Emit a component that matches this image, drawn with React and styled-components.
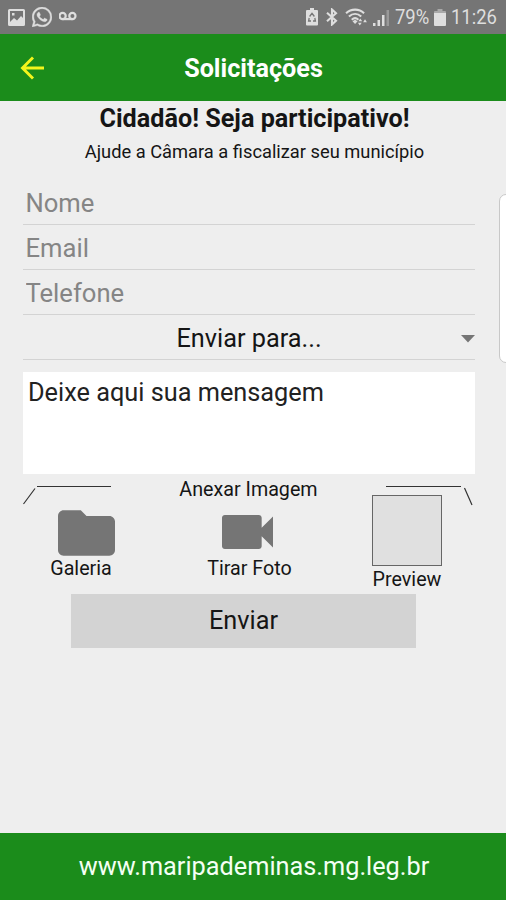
import React from 'react';
import styled, { createGlobalStyle } from 'styled-components';

const GlobalStyle = createGlobalStyle`
  * {
    box-sizing: border-box;
  }

  body {
    margin: 0;
    background: #eeeeee;
    font-family: Roboto, sans-serif;
  }
`;

const Screen = styled.div`
  position: relative;
  display: flex;
  flex-direction: column;
  width: 506px;
  height: 900px;
  overflow: hidden;
  background: #eeeeee;
  color: #151515;
`;

const StatusBar = styled.div`
  display: flex;
  justify-content: space-between;
  flex: none;
  height: 34px;
  padding: 0 9px 0 8px;
  background: #757575;
  color: #dedede;
`;

const StatusGroup = styled.div`
  display: flex;
  align-items: center;
  gap: ${(props) => props.$gap}px;
  height: 34px;

  svg {
    display: block;
    flex: none;
  }
`;

const StatusText = styled.span`
  width: ${(props) => props.$width}px;
  font-size: 20.5px;
  line-height: 36px;
  white-space: nowrap;
  transform: scaleX(0.9);
  transform-origin: left;
`;

const Header = styled.header`
  display: grid;
  grid-template-columns: 66px 1fr 66px;
  align-items: center;
  flex: none;
  height: 67px;
  padding-top: 1px;
  background: #1b8c1b;
`;

const BackButton = styled.button`
  display: flex;
  padding: 0 0 0 20px;
  border: 0;
  background: none;
`;

const Title = styled.h1`
  margin: 0;
  padding: 2px 0 0 1px;
  color: #fff;
  font-size: 25.2px;
  font-weight: 700;
  line-height: 64px;
  text-align: center;
`;

const Heading = styled.h2`
  margin: 0;
  padding-left: 3px;
  font-size: 25.2px;
  font-weight: 700;
  line-height: 35px;
  text-align: center;
`;

const Subtitle = styled.p`
  margin: 0 0 13px;
  padding-left: 3px;
  font-size: 18.3px;
  line-height: 31px;
  text-align: center;
`;

const Form = styled.form`
  display: flex;
  flex-direction: column;
  margin: 0 31px 0 23px;
`;

const Field = styled.input`
  height: 45px;
  padding: 2px 2.5px 0;
  border: 0;
  border-bottom: 1px solid #d3d3d3;
  outline: 0;
  background: none;
  font: 25.6px Roboto, sans-serif;

  &::placeholder {
    color: #858585;
    opacity: 1;
  }
`;

const Select = styled.div`
  display: flex;
  align-items: center;
  height: 45px;
  padding-top: 3px;
  border-bottom: 1px solid #d3d3d3;
  font-size: 25.3px;

  span {
    flex: 1;
    padding-left: 14px;
    text-align: center;
  }
`;

const Message = styled.textarea`
  height: 102px;
  margin: 12px 0 10px;
  padding: 6px 5px;
  border: 0;
  outline: 0;
  resize: none;
  background: #fff;
  color: #222;
  font: 25.3px/30px Roboto, sans-serif;
`;

const AttachHeader = styled.div`
  display: flex;
  justify-content: space-between;
  height: 22px;
  margin-bottom: -11px;
  font-size: 19.7px;
  line-height: 12px;
`;

const AttachRow = styled.div`
  display: flex;
  height: 99px;
`;

const Attachment = styled.div`
  display: flex;
  flex-direction: column;
  align-items: center;
  width: ${(props) => props.$width}px;
  margin-left: ${(props) => props.$left}px;
  padding-top: ${(props) => props.$top}px;
  color: #757575;

  svg {
    display: block;
    flex: none;
  }
`;

const Label = styled.span`
  margin-top: ${(props) => props.$top}px;
  margin-left: ${(props) => props.$shift || 0}px;
  color: #151515;
  font-size: 19.7px;
  line-height: 24px;
  white-space: nowrap;
`;

const PreviewBox = styled.div`
  flex: none;
  width: 70px;
  height: 71px;
  border: 1px solid #666;
  background: #e0e0e0;
`;

const SendButton = styled.button`
  width: 345px;
  height: 54px;
  margin-left: 48px;
  padding: 0 0 2px;
  border: 0;
  background: #d3d3d3;
  color: #151515;
  font: 25.3px Roboto, sans-serif;
`;

const Footer = styled.footer`
  flex: none;
  height: 67px;
  margin-top: auto;
  padding-left: 2px;
  background: #1b8c1b;
  color: #f4fff4;
  font-size: 25.3px;
  line-height: 67px;
  text-align: center;
`;

// edge panel handle, floats over the form
const EdgeHandle = styled.div`
  position: absolute;
  top: 194px;
  right: -8px;
  width: 15px;
  height: 169px;
  border: 1px solid #c8c8c8;
  border-radius: 7px;
  background: #fff;
`;

const PictureIcon = () => (
  <svg width="17" height="17" viewBox="0 0 17 17">
    <path
      fill="currentColor"
      fillRule="evenodd"
      d="M1.500 0h14A1.500 1.500 0 0 1 17 1.500v14a1.500 1.500 0 0 1-1.500 1.500h-14A1.500 1.500 0 0 1 0 15.500v-14A1.500 1.500 0 0 1 1.500 0zM2 2v11l4-4 3 2.500L13 7l2 2V2zM4 4h2.500v2.500H4z"
    />
  </svg>
);

const WhatsAppIcon = () => (
  <svg width="20" height="20" viewBox="0 0 24 24" fill="currentColor" stroke="currentColor" strokeWidth=".5">
    <path d="M17.472 14.382c-.297-.149-1.758-.867-2.03-.967-.273-.099-.471-.148-.67.15-.197.297-.767.966-.94 1.164-.173.199-.347.223-.644.075-.297-.15-1.255-.463-2.39-1.475-.883-.788-1.48-1.761-1.653-2.059-.173-.297-.018-.458.13-.606.134-.133.298-.347.446-.52.149-.174.198-.298.298-.497.099-.198.05-.371-.025-.52-.075-.149-.669-1.612-.916-2.207-.242-.579-.487-.5-.669-.51-.173-.008-.371-.01-.57-.01-.198 0-.52.074-.792.372-.272.297-1.04 1.016-1.04 2.479 0 1.462 1.065 2.875 1.213 3.074.149.198 2.096 3.2 5.077 4.487.709.306 1.262.489 1.694.625.712.227 1.36.195 1.871.118.571-.085 1.758-.719 2.006-1.413.248-.694.248-1.289.173-1.413-.074-.124-.272-.198-.57-.347m-5.421 7.403h-.004a9.87 9.87 0 0 1-5.031-1.378l-.361-.214-3.741.982.998-3.648-.235-.374a9.86 9.86 0 0 1-1.51-5.26c.001-5.45 4.436-9.884 9.888-9.884 2.64 0 5.122 1.03 6.988 2.898a9.825 9.825 0 0 1 2.893 6.994c-.003 5.45-4.437 9.884-9.885 9.884m8.413-18.297A11.815 11.815 0 0 0 12.05 0C5.495 0 .16 5.335.157 11.892c0 2.096.547 4.142 1.588 5.945L.057 24l6.305-1.654a11.882 11.882 0 0 0 5.683 1.448h.005c6.554 0 11.89-5.335 11.893-11.893a11.821 11.821 0 0 0-3.48-8.413Z" />
  </svg>
);

const VoicemailIcon = () => (
  <svg width="19" height="12" viewBox="1 0 19 12" fill="none" stroke="currentColor" strokeWidth="2.200">
    <circle cx="4.600" cy="5" r="3.100" />
    <circle cx="14.400" cy="5" r="3.100" />
    <path d="M4.600 8.100h9.800" />
  </svg>
);

const BatterySaverIcon = () => (
  <svg width="15" height="18" viewBox="0 0 15 18">
    <path
      fill="currentColor"
      d="M4 0h4v2h3a1 1 0 0 1 1 1v13.500a1 1 0 0 1-1 1H1a1 1 0 0 1-1-1V3a1 1 0 0 1 1-1h3z"
    />
    <path d="M3.600 8.500 6 5.400l2.400 3.100M8.800 10l.6 3H7M5 13H2.600l.6-3" fill="none" stroke="#757575" strokeWidth="1.300" />
  </svg>
);

const BluetoothIcon = () => (
  <svg width="14" height="18" viewBox="0 0 14 18" fill="none" stroke="currentColor" strokeWidth="2.100">
    <path d="m1 4.700 9 8.100-4 3.700v-15l4 3.700-9 8.100" />
  </svg>
);

const WifiIcon = () => (
  <svg width="23" height="18" viewBox="0 0 24 19" fill="none" stroke="currentColor" strokeWidth="2.200">
    <path d="M1 5.500c5.400-5 13.600-5 19 0" />
    <path d="M4 9c4-3.600 9-3.600 13 0" />
    <path d="M7 12.300c2.200-2 4.800-2 7 0" />
    <path d="m7.800 14 2.700-1.500 2.700 1.500-2.700 3z" fill="currentColor" stroke="none" />
    <path d="m16 11 2 3h-4zM13.500 15.500h4l-2 3zM21 12l2 3h-4z" fill="currentColor" stroke="none" />
  </svg>
);

const SignalIcon = () => (
  <svg width="17" height="17" viewBox="0 0 17 17" fill="currentColor">
    <path d="M0 14h2.500v3H0zM4.500 11H7v6H4.500zM9 6h2.500v11H9z" />
    <path d="M13.500 1H16v16h-2.500z" opacity=".35" />
  </svg>
);

const BatteryIcon = () => (
  <svg width="12" height="17" viewBox="0 0 12 17" fill="currentColor">
    <path d="M3.500 0h5v2H11a1 1 0 0 1 1 1v1.500H0V3a1 1 0 0 1 1-1h2.500z" opacity=".5" />
    <path d="M0 4h12v12a1 1 0 0 1-1 1H1a1 1 0 0 1-1-1z" />
  </svg>
);

const BackIcon = () => (
  <svg width="25" height="24" viewBox="0 0 25 24" fill="none" stroke="#f3f51c" strokeWidth="2.900">
    <path d="M24 12H2.500M13 1.500 2.500 12 13 22.500" />
  </svg>
);

const FolderIcon = () => (
  <svg width="57" height="46" viewBox="2 4 20 16" fill="currentColor">
    <path d="M10 4H4c-1.100 0-1.990.9-1.990 2L2 18c0 1.100.9 2 2 2h16c1.100 0 2-.9 2-2V8c0-1.100-.9-2-2-2h-8l-2-2z" />
  </svg>
);

const CameraIcon = () => (
  <svg width="51" height="34" viewBox="3 6 18 12" fill="currentColor">
    <path d="M17 10.500V7c0-.55-.45-1-1-1H4c-.55 0-1 .45-1 1v10c0 .55.45 1 1 1h12c.55 0 1-.45 1-1v-3.500l4 4v-11l-4 4z" />
  </svg>
);

const App = () => {
  return (
    <>
      <GlobalStyle />
      <Screen>
        <StatusBar>
          <StatusGroup $gap={7}>
            <PictureIcon />
            <WhatsAppIcon />
            <VoicemailIcon />
          </StatusGroup>
          <StatusGroup $gap={5}>
            <BatterySaverIcon />
            <BluetoothIcon />
            <WifiIcon />
            <SignalIcon />
            <StatusText $width={34}>79%</StatusText>
            <BatteryIcon />
            <StatusText $width={46}>11:26</StatusText>
          </StatusGroup>
        </StatusBar>

        <Header>
          <BackButton type="button" aria-label="Voltar">
            <BackIcon />
          </BackButton>
          <Title>Solicitações</Title>
        </Header>

        <Heading>Cidadão! Seja participativo!</Heading>
        <Subtitle>Ajude a Câmara a fiscalizar seu município</Subtitle>

        <Form onSubmit={(e) => e.preventDefault()}>
          <Field placeholder="Nome" />
          <Field placeholder="Email" />
          <Field placeholder="Telefone" />
          <Select>
            <span>Enviar para...</span>
            <svg width="14" height="8" viewBox="0 0 14 8">
              <path d="M0 0h14L7 7.500z" fill="#757575" />
            </svg>
          </Select>
          <Message defaultValue="Deixe aqui sua mensagem" />

          <AttachHeader>
            <svg width="88" height="22" viewBox="0 0 88 22" fill="none" stroke="#333" strokeWidth="1.200">
              <path d="M.5 20 12 4.500M14 2.500h74" />
            </svg>
            <span>Anexar Imagem</span>
            <svg width="89" height="22" viewBox="0 0 89 22" fill="none" stroke="#333" strokeWidth="1.200">
              <path d="M0 2.500h75M78.500 4l7.500 17" />
            </svg>
          </AttachHeader>

          <AttachRow>
            <Attachment $width={57} $left={35} $top={15}>
              <FolderIcon />
              <Label $top={1} $shift={-11}>Galeria</Label>
            </Attachment>
            <Attachment $width={51} $left={107} $top={20}>
              <CameraIcon />
              <Label $top={8} $shift={4}>Tirar Foto</Label>
            </Attachment>
            <Attachment $width={70} $left={99} $top={0}>
              <PreviewBox />
              <Label $top={2}>Preview</Label>
            </Attachment>
          </AttachRow>

          <SendButton type="submit">Enviar</SendButton>
        </Form>

        <Footer>www.maripademinas.mg.leg.br</Footer>
        <EdgeHandle />
      </Screen>
    </>
  );
};

export default App;
